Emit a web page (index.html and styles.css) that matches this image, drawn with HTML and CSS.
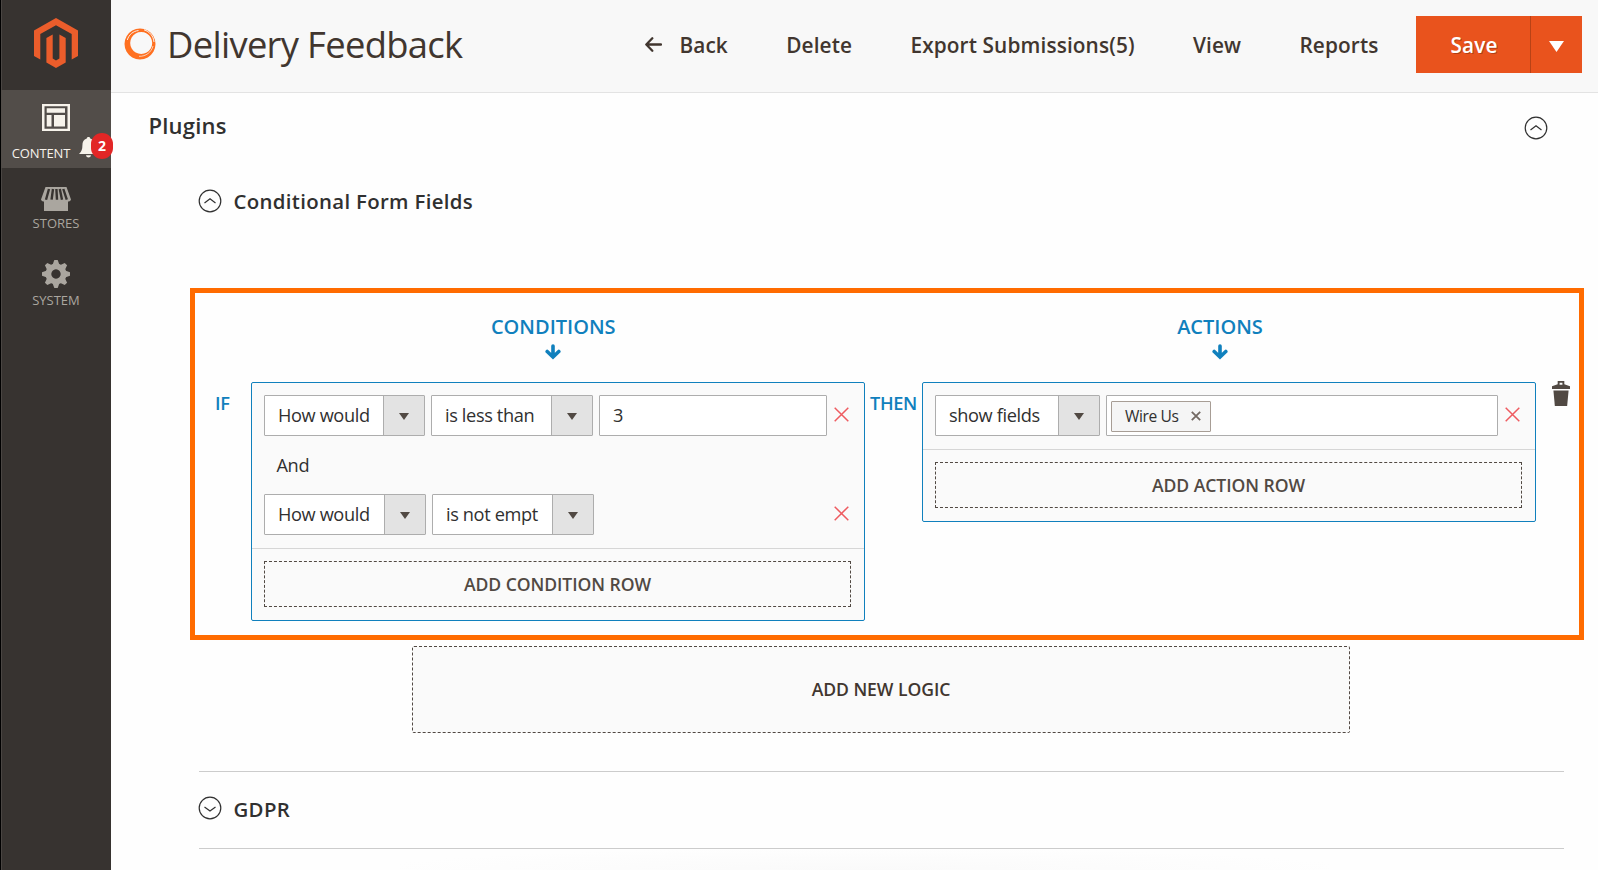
FILE: index.html
```html
<!DOCTYPE html>
<html lang="en">
<head>
<meta charset="utf-8">
<title>Delivery Feedback</title>
<link rel="stylesheet" href="styles.css">
</head>
<body>
<div class="app">
  <aside class="sidebar">
    <a class="brand">
      <svg width="44" height="50" viewBox="0 0 44 50" fill="#eb5d2b"><path d="M22 0 44 12.5V38l-6.3 3.600V16.100L22 7.200 6.300 16.100V41.600L0 38V12.500Z"/><path d="M18.700 16.400V40.500L22 42.500 25.400 40.500V16.400L31.700 20V44.500L22 50 12.400 44.500V20Z"/></svg>
    </a>
    <a class="menu menu-content">
      <svg class="ico-content" width="28" height="27" viewBox="0 0 28 27"><path fill="#f7f3eb" fill-rule="evenodd" d="M0 0H28V27H0ZM2.500 2.300V24.700H25.500V2.300Z"/><path fill="#f7f3eb" d="M4.700 4.300H23V8.800H4.700ZM4.700 11H9.500V22.500H4.700ZM12 11H23V22.500H12Z"/></svg>
      <span class="label">CONTENT</span>
      <span class="alert">
        <svg width="19" height="21" viewBox="0 0 19 21" fill="#f7f3eb"><path d="M9.500 0C10.600 0 11.200.700 11.200 1.600 14.500 2.500 15.600 5.300 15.600 8.500 15.600 12.500 16.500 14.500 19 17H0C2.500 14.500 3.400 12.500 3.400 8.500 3.400 5.300 4.600 2.500 7.800 1.600 7.800.700 8.400 0 9.500 0ZM7 18.300H12C11.600 21.300 7.400 21.300 7 18.300Z"/></svg>
        <span class="badge">2</span>
      </span>
    </a>
    <a class="menu menu-stores">
      <svg width="30" height="25" viewBox="0 0 30 25"><path fill="#aaa69f" d="M4.500 0H25.500L30 12.500C29.500 14 28.500 14.500 27 14.500V24H3V14.500C1.500 14.500.500 14 0 12.500Z"/><path stroke="#373330" stroke-width="2.400" fill="none" d="M8 2 5 12.700M12 2 10.600 12.700M15.400 2 16 12.700M18.800 2 21 12.700M22.300 2 25.800 12.700"/></svg>
      <span class="label">STORES</span>
    </a>
    <a class="menu menu-system">
      <svg width="28" height="28" viewBox="0 0 28 28"><g fill="#aaa69f"><path fill-rule="evenodd" d="M14 3.500a10.500 10.500 0 1 0 .01 0ZM14 9.300a4.700 4.700 0 1 1-.01 0Z"/><path id="tooth" d="M10.500 5 12.300 0H15.700L17.500 5Z"/><use href="#tooth" transform="rotate(45 14 14)"/><use href="#tooth" transform="rotate(90 14 14)"/><use href="#tooth" transform="rotate(135 14 14)"/><use href="#tooth" transform="rotate(180 14 14)"/><use href="#tooth" transform="rotate(225 14 14)"/><use href="#tooth" transform="rotate(270 14 14)"/><use href="#tooth" transform="rotate(315 14 14)"/></g></svg>
      <span class="label">SYSTEM</span>
    </a>
  </aside>

  <div class="page">
    <header class="header">
      <svg class="ring" width="32" height="32" viewBox="0 0 32 32"><path fill="#ff7020" fill-rule="evenodd" d="M16 .500a15.500 15.500 0 1 0 .01 0ZM17.200 3.900a11 11 0 1 1-.01 0Z"/><g fill="none" stroke="#f8f8f8"><path stroke-width=".9" d="M3.300 12C5 6.500 9 3.200 14.500 2.500"/><path stroke-width=".7" d="M15 28.300C22 28.600 27.500 24 29 18"/><path stroke-width="1" d="M20 1.800C25.500 3.500 29.500 8 30 14"/></g></svg>
      <h1 class="title">Delivery Feedback</h1>
      <nav class="actions">
        <a class="back"><svg width="17" height="15" viewBox="0 0 17 15" fill="none" stroke="#41362f" stroke-width="2.300" stroke-linecap="round" stroke-linejoin="round"><path d="M16 7.500H2M7.300 1.300 1.300 7.500 7.300 13.700"/></svg>Back</a>
        <a>Delete</a>
        <a>Export Submissions(5)</a>
        <a>View</a>
        <a>Reports</a>
      </nav>
      <div class="save">
        <button class="save-main">Save</button>
        <button class="save-more"><svg width="15" height="11" viewBox="0 0 15 11"><path fill="#fff" d="M0 0H15L7.500 11Z"/></svg></button>
      </div>
    </header>

    <main class="main">
      <div class="section-title">
        <h2>Plugins</h2>
        <svg width="24" height="24" viewBox="0 0 24 24" fill="none" stroke="#303030" stroke-width="1.200"><circle cx="12" cy="12" r="10.800"/><path d="M6.500 14 12 9.800 17.500 14"/></svg>
      </div>
      <div class="sub-title">
        <svg width="24" height="24" viewBox="0 0 24 24" fill="none" stroke="#303030" stroke-width="1.200"><circle cx="12" cy="12" r="10.800"/><path d="M6.500 14 12 9.800 17.500 14"/></svg>
        <h3>Conditional Form Fields</h3>
      </div>

      <section class="logic">
        <div class="word word-if">IF</div>
        <div class="group">
          <div class="group-head">CONDITIONS
            <svg width="16" height="16" viewBox="0 0 16 16" fill="none" stroke="#1080bd" stroke-width="3.600" stroke-linecap="round"><path d="M8 2V12M2.200 7.500 8 13 13.800 7.500"/></svg>
          </div>
          <div class="panel">
            <div class="row">
              <div class="select w161"><span>How would</span><i></i></div>
              <div class="select w162"><span>is less than</span><i></i></div>
              <div class="input">3</div>
              <svg class="remove" width="15" height="15" viewBox="0 0 15 15"><path d="M.7.7 14.300 14.300M14.300.7.7 14.300"/></svg>
            </div>
            <div class="and">And</div>
            <div class="row">
              <div class="select w162"><span>How would</span><i></i></div>
              <div class="select w162"><span>is not empt</span><i></i></div>
              <svg class="remove" width="15" height="15" viewBox="0 0 15 15"><path d="M.7.7 14.300 14.300M14.300.7.7 14.300"/></svg>
            </div>
            <div class="foot"><button class="add">ADD CONDITION ROW</button></div>
          </div>
        </div>
        <div class="word word-then">THEN</div>
        <div class="group group-actions">
          <div class="group-head"><span>ACTIONS</span>
            <svg width="16" height="16" viewBox="0 0 16 16" fill="none" stroke="#1080bd" stroke-width="3.600" stroke-linecap="round"><path d="M8 2V12M2.200 7.500 8 13 13.800 7.500"/></svg>
          </div>
          <div class="panel">
            <div class="row">
              <div class="select w165"><span>show fields</span><i></i></div>
              <div class="input multi"><span class="tag">Wire Us<svg width="10" height="10" viewBox="0 0 10 10"><path stroke="#736963" stroke-width="1.800" d="M.8.8 9.200 9.200M9.200.8.8 9.200"/></svg></span></div>
              <svg class="remove" width="15" height="15" viewBox="0 0 15 15"><path d="M.7.7 14.300 14.300M14.300.7.7 14.300"/></svg>
            </div>
            <div class="foot"><button class="add">ADD ACTION ROW</button></div>
          </div>
        </div>
        <svg class="trash" width="18" height="25" viewBox="0 0 19 26" preserveAspectRatio="none" fill="#514943"><path fill-rule="evenodd" d="M6 0H13V3.500L19 5.500V8.300H0V5.500L6 3.500ZM8 1.800V4H11V1.800Z"/><path d="M1.500 10H17.500L16 26H3Z"/></svg>
      </section>

      <button class="new-logic">ADD NEW LOGIC</button>

      <div class="gdpr">
        <svg width="24" height="24" viewBox="0 0 24 24" fill="none" stroke="#303030" stroke-width="1.200"><circle cx="12" cy="12" r="10.800"/><path d="M6.500 11 12 15 17.500 11"/></svg>
        <h3>GDPR</h3>
      </div>
      <div class="fade"></div>
    </main>
  </div>
</div>
</body>
</html>
```
FILE: styles.css
```css
* { box-sizing: border-box; }
body { margin: 0; font-family: "Open Sans", "Noto Sans", sans-serif; color: #303030; background: #fefefe; }
h1, h2, h3 { margin: 0; }
svg { display: block; flex: none; }
button { font: inherit; margin: 0; padding: 0; border: 0; }

.app { display: flex; width: 1598px; height: 870px; overflow: hidden; }

.sidebar { width: 111px; flex: none; background: #373330; border-left: 1px solid #000; display: flex; flex-direction: column; box-shadow: inset 1px 0 #4a4643; }
.brand { height: 90px; padding: 18px 0 0 33px; }
.menu { display: flex; flex-direction: column; align-items: center; color: #aaa69f; font-size: 13px; line-height: 18px; position: relative; }
.menu-content { height: 78px; padding-top: 14px; background: #524d49; color: #f7f2ec; }
.menu-content .label { margin: 13px 30px 0 0; letter-spacing: -.1px; }
.menu-stores { height: 77px; padding-top: 19px; }
.menu-stores .label { margin-top: 2px; }
.menu-system { padding-top: 15px; }
.menu-system .label { margin-top: 3px; }
.alert { position: absolute; left: 78px; top: 47px; z-index: 2; }
.badge { position: absolute; left: 12px; top: -4px; width: 22px; height: 26px; border-radius: 11px; background: #e22626; color: #fff; font-weight: 700; font-size: 14px; line-height: 26px; text-align: center; }

.page { flex: 1; display: flex; flex-direction: column; min-width: 0; }
.header { height: 93px; background: #f8f8f8; border-bottom: 1px solid #e3e3e3; display: flex; align-items: flex-start; padding: 16px 16px 0 13px; }
.ring { margin-top: 12px; }
.title { font-weight: 400; font-size: 36.400px; line-height: 56px; letter-spacing: -.7px; color: #41362f; margin: 0 0 0 11px; white-space: nowrap; }
.actions { margin-left: auto; margin-right: 37.500px; display: flex; gap: 58.300px; font-size: 20.800px; font-weight: 600; letter-spacing: .12px; line-height: 59px; color: #41362f; white-space: nowrap; }
.back { display: flex; align-items: center; gap: 17.500px; }
.back svg { margin-top: -2px; }
.save { display: flex; height: 57px; }
.save button { background: #e9531d; color: #fff; }
.save-main { width: 114px; padding-left: 2px; font-size: 20.800px; font-weight: 600; letter-spacing: .1px; text-shadow: 1px 1px 0 rgba(0,0,0,.25); }
.save .save-more { width: 52px; border-left: 1px solid #b84216; display: flex; justify-content: center; padding-top: 25px; }

.main { flex: 1; display: flex; flex-direction: column; }
.section-title { display: flex; justify-content: space-between; height: 60px; padding: 17px 50.500px 0 37.500px; }
.section-title svg { margin-top: 6px; }
.section-title h2 { font-size: 22px; font-weight: 600; line-height: 30px; letter-spacing: .2px; }
.sub-title { display: flex; gap: 11.500px; height: 135px; padding: 36px 0 0 87px; }
.sub-title h3, .gdpr h3 { font-size: 20.400px; font-weight: 600; line-height: 28px; letter-spacing: .32px; margin-top: -2px; }

.logic { margin-left: 79px; width: 1394px; height: 352px; border: 5px solid #ff6b00; display: flex; padding-left: 19px; color: #1080bd; }
.word { font-weight: 600; font-size: 18.200px; line-height: 24px; padding-top: 98px; letter-spacing: -.35px; }
.word-if { width: 37px; padding-left: 1px; }
.word-then { width: 57px; text-align: center; }
.group { width: 614px; flex: none; padding-top: 20px; }
.group-head { height: 69px; display: flex; flex-direction: column; align-items: center; font-size: 20px; font-weight: 600; line-height: 28px; margin-right: 9.500px; }
.group-head svg { margin-top: 3px; }
.group-actions .group-head { margin-right: 18px; }
.panel { background: #fafafa; border: 1px solid #1080bd; border-radius: 2px; color: #303030; font-size: 18.200px; letter-spacing: -.38px; padding-top: 12px; }
.row { display: flex; gap: 6px; padding: 0 15px 0 12px; height: 41px; }
.select, .input { border: 1px solid #adadad; background: #fff; height: 41px; line-height: 39px; display: flex; border-radius: 1px; white-space: nowrap; }
.select span { flex: 1; padding-left: 13px; }
.select i { width: 41px; background: #e3e3e3; border-left: 1px solid #adadad; display: flex; justify-content: center; padding-top: 17px; }
.select i::before { content: ""; width: 0; height: 0; border: 5px solid transparent; border-top: 7px solid #514943; border-bottom: 0; }
.w161 { width: 161px; }
.w162 { width: 162px; }
.w165 { width: 165px; }
.input { flex: 1; padding-left: 13px; }
.multi { padding: 5px 4px; }
.tag { display: flex; align-items: center; height: 31px; width: 100px; border: 1px solid #a79d95; border-radius: 1px; background: #f5f5f5; font-size: 15.600px; line-height: 29px; padding-left: 13px; gap: 12px; }
.tag svg { margin-top: -1px; }
.remove { margin: 12px 0 0 1px; stroke: #ee5b60; stroke-width: 1.500; }
.row .select + .remove { margin-left: auto; }
.and { height: 58px; line-height: 58px; padding-left: 24.500px; }
.foot { margin-top: 13px; border-top: 1px solid #d6d6d6; padding: 12px 13px 13px 12px; }
.add { width: 587px; height: 46px; border: 1px dashed #514943; background: transparent; color: #514943; font-weight: 600; font-size: 17.600px; letter-spacing: -.06px; display: block; }
.trash { margin: 88px 0 0 16px; }

.new-logic { margin: 6px 0 0 301px; width: 938px; height: 87px; padding-bottom: 2px; border: 1px dashed #514943; border-radius: 2px; background: #fafafa; color: #41362f; font-weight: 600; font-size: 17.600px; letter-spacing: -.06px; }
.gdpr { margin: 38px 34px 0 88px; height: 78px; border-top: 1px solid #ccc; border-bottom: 1px solid #ccc; display: flex; gap: 11.500px; padding-top: 24px; }
.gdpr svg { margin-left: -1px; }
.gdpr h3 { margin-top: -1px; }
.fade { margin-left: 289px; width: 930px; height: 21px; background: radial-gradient(ellipse at bottom, #fafafa, #fefefe 75%); }
```
